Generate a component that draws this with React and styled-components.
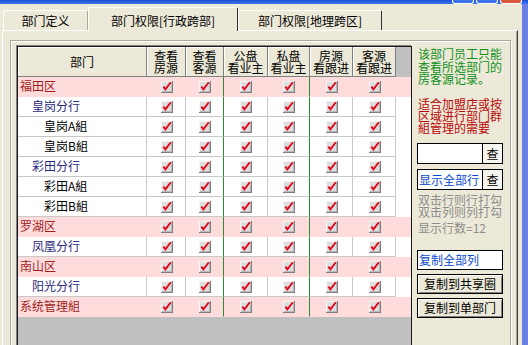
import React from 'react';
import styled, { createGlobalStyle } from 'styled-components';

const GlobalStyle = createGlobalStyle`
  html, body {
    margin: 0;
    padding: 0;
    background: #ece9d8;
  }
  body {
    font-family: 'Noto Sans CJK SC', 'Noto Sans', sans-serif;
    font-size: 12px;
    color: #000;
  }
`;

const Window = styled.div`
  width: 528px;
  height: 345px;
  overflow: hidden;
  display: flex;
  flex-direction: column;
  background: #ece9d8;
`;

// TITLE --- TITLE --- TITLE ---
const TitleBar = styled.div`
  flex: none;
  height: 4px;
  display: flex;
  justify-content: flex-end;
  align-items: flex-end;
  gap: 2px;
  padding-right: 6px;
  background: linear-gradient(#1d4fd0, #3a74ee);
`;
const TitleButton = styled.div`
  box-sizing: border-box;
  width: 22px;
  height: 4px;
  border: 1px solid #fff;
  border-top: none;
  border-radius: 0 0 3px 3px;
  background: ${p => (p.$close ? '#d9583c' : '#3d74ea')};
`;

const Body = styled.div`
  flex: 1;
  display: flex;
  min-height: 0;
`;
const Main = styled.div`
  flex: 1;
  display: flex;
  flex-direction: column;
  padding: 0 4px 0 2px;
  min-width: 0;
`;
const Frame = styled.div`
  width: 6px;
  flex: none;
  background: #6a7ee6;
`;

// TABS --- TABS --- TABS ---
const TabStrip = styled.div`
  flex: none;
  height: 26px;
  display: flex;
  align-items: flex-end;
  padding-left: 1px;
  position: relative;
  z-index: 1;
`;
const Tab = styled.div`
  box-sizing: border-box;
  width: ${p => p.$w}px;
  height: ${p => (p.$active ? 24 : 20)}px;
  margin-bottom: ${p => (p.$active ? -1 : 0)}px;
  padding-top: ${p => (p.$active ? 1 : 0)}px;
  display: flex;
  align-items: center;
  justify-content: center;
  background: #ece9d8;
  border-top: 1px solid #fff;
  border-left: 1px solid #fff;
  border-right: 1px solid ${p => (p.$dark ? '#303030' : '#aca899')};
  border-radius: 2px 2px 0 0;
  white-space: nowrap;
`;

const Panel = styled.div`
  flex: 1;
  display: flex;
  flex-direction: column;
  border-top: 1px solid #fff;
  border-left: 1px solid #fff;
  border-right: 1px solid #404040;
  box-shadow: inset -1px 0 #aca899;
  min-height: 0;
`;
const GroupBox = styled.div`
  flex: none;
  height: 330px;
  margin: 9px 6px 0 7px;
  display: flex;
  align-items: flex-start;
  border: 1px solid #aca899;
  box-shadow: inset 1px 1px #fff, 1px 1px #fff;
`;

// GRID --- GRID --- GRID ---
const Grid = styled.div`
  box-sizing: border-box;
  flex: none;
  width: 395px;
  height: 320px;
  margin: 5px 0 0 6px;
  border: 1px solid #1a1a1a;
  box-shadow: -1px -1px 0 #808080;
  background: #c0c0c0;
`;
const HeaderRow = styled.div`
  display: flex;
  height: 30px;
`;
const HeaderCell = styled.div`
  box-sizing: border-box;
  width: ${p => p.$w}px;
  display: flex;
  flex-direction: column;
  align-items: center;
  justify-content: center;
  text-align: center;
  line-height: 12px;
  background: #ece9d8;
  border-right: 1px solid #808080;
  border-bottom: 1px solid #808080;
  box-shadow: inset 1px 1px #fff;
`;
const HeaderLine = styled.span`
  display: block;
  height: 12px;
  white-space: nowrap;
`;
const Row = styled.div`
  display: flex;
  height: 20px;
  background: ${p => (p.$pink ? '#ffdcdc' : '#fff')};
`;
const Cell = styled.div`
  box-sizing: border-box;
  width: ${p => p.$w}px;
  display: flex;
  align-items: center;
  justify-content: center;
  padding-bottom: 1px;
  border-right: 1px solid ${p => (p.$green ? '#2f8a2f' : p.$pink ? '#ffdcdc' : '#c8c8c8')};
  border-bottom: 1px solid ${p => (p.$pink ? '#ffdcdc' : '#c8c8c8')};
`;
const LabelCell = styled(Cell)`
  justify-content: flex-start;
  padding-left: ${p => 2 + p.$level * 12}px;
  padding-bottom: 2px;
  color: ${p => ['#a01c1c', '#2a2a7a', '#000'][p.$level]};
  white-space: nowrap;
`;

// SIDE --- SIDE --- SIDE ---
const Side = styled.div`
  flex: 1;
  display: flex;
  flex-direction: column;
  padding: 7px 7px 0 5px;
`;
const Note = styled.div`
  color: ${p => p.$color};
  line-height: ${p => p.$lh}px;
  margin-top: ${p => p.$mt || 0}px;
  padding-left: 1px;
  white-space: nowrap;
`;
const SearchBox = styled.div`
  box-sizing: border-box;
  display: flex;
  height: 21px;
  margin-top: ${p => p.$mt}px;
  border: 1px solid #000;
  background: #fff;
`;
const SearchField = styled.div`
  flex: 1;
  display: flex;
  align-items: center;
  padding-left: 1px;
  color: #0a4ad0;
  white-space: nowrap;
`;
const SearchButton = styled.div`
  width: 19px;
  display: flex;
  align-items: center;
  justify-content: center;
  border-left: 1px solid #000;
  background: #f6f5f0;
`;
const CopyAll = styled.div`
  box-sizing: border-box;
  height: 20px;
  margin-top: 15.5px;
  display: flex;
  align-items: center;
  padding-left: 1px;
  border: 1px solid #000;
  background: #fff;
  color: #0a4ad0;
`;
const ActionButton = styled.div`
  box-sizing: border-box;
  height: 20px;
  margin-top: 4px;
  display: flex;
  align-items: center;
  justify-content: center;
  border: 1px solid #000;
  box-shadow: inset 1px 1px #fff, inset -1px -1px #808080;
  background: #ece9d8;
`;

const CheckMark = () => (
  <svg width="13" height="13" viewBox="0 0 13 13">
    <rect x="1" y="1" width="12" height="12" fill="#7e7e7e" />
    <rect x="1" y="1" width="11" height="11" fill="#f4f4f4" />
    <rect x="2" y="2" width="10" height="10" fill="#b8b8b8" />
    <rect x="2" y="2" width="9" height="9" fill="#dedede" />
    <path d="M3.4 6.6 L5.4 9.4 L10.8 2.2" fill="none" stroke="#e0081c" strokeWidth="1.9" />
  </svg>
);

const cols = [129, 39, 38, 44, 42, 43, 43];
const headers = [['部门'], ['查看', '房源'], ['查看', '客源'], ['公盘', '看业主'], ['私盘', '看业主'], ['房源', '看跟进'], ['客源', '看跟进']];
const greenAfter = [2, 4];

const rows = [
  { name: '福田区', level: 0 },
  { name: '皇岗分行', level: 1 },
  { name: '皇岗A組', level: 2 },
  { name: '皇岗B組', level: 2 },
  { name: '彩田分行', level: 1 },
  { name: '彩田A組', level: 2 },
  { name: '彩田B組', level: 2 },
  { name: '罗湖区', level: 0 },
  { name: '凤凰分行', level: 1 },
  { name: '南山区', level: 0 },
  { name: '阳光分行', level: 1 },
  { name: '系统管理組', level: 0 },
];

export default function App() {
  return (
    <Window>
      <GlobalStyle />
      <TitleBar>
        <TitleButton />
        <TitleButton />
        <TitleButton $close />
      </TitleBar>
      <Body>
        <Main>
          <TabStrip>
            <Tab $w={85}>部门定义</Tab>
            <Tab $w={150} $active $dark>部门权限[行政跨部]</Tab>
            <Tab $w={144} $dark>部门权限[地理跨区]</Tab>
          </TabStrip>
          <Panel>
            <GroupBox>
              <Grid>
                <HeaderRow>
                  {headers.map((h, i) => (
                    <HeaderCell key={i} $w={cols[i]}>
                      {h.map(line => <HeaderLine key={line}>{line}</HeaderLine>)}
                    </HeaderCell>
                  ))}
                </HeaderRow>
                {rows.map((r, ri) => {
                  const pink = r.level === 0;
                  return (
                    <Row key={ri} $pink={pink}>
                      <LabelCell $w={cols[0]} $level={r.level} $pink={pink}>{r.name}</LabelCell>
                      {cols.slice(1).map((w, ci) => (
                        <Cell key={ci} $w={w} $pink={pink} $green={greenAfter.includes(ci + 1)}>
                          <CheckMark />
                        </Cell>
                      ))}
                    </Row>
                  );
                })}
              </Grid>
              <Side>
                <Note $color="#10901a" $lh={12.5}>
                  该部门员工只能<br />查看所选部门的<br />房客源记录。
                </Note>
                <Note $color="#b80808" $lh={12} $mt={12}>
                  适合加盟店或按<br />区域进行部门群<br />組管理的需要
                </Note>
                <SearchBox $mt={9.5}>
                  <SearchField />
                  <SearchButton>查</SearchButton>
                </SearchBox>
                <SearchBox $mt={5}>
                  <SearchField>显示全部行</SearchField>
                  <SearchButton>查</SearchButton>
                </SearchBox>
                <Note $color="#8c8c8c" $lh={11.5} $mt={4}>
                  双击行则行打勾<br />双击列则列打勾
                </Note>
                <Note $color="#8c8c8c" $lh={12} $mt={5}>
                  显示行数=12
                </Note>
                <CopyAll>复制全部列</CopyAll>
                <ActionButton>复制到共享圈</ActionButton>
                <ActionButton>复制到单部门</ActionButton>
              </Side>
            </GroupBox>
          </Panel>
        </Main>
        <Frame />
      </Body>
    </Window>
  );
}
